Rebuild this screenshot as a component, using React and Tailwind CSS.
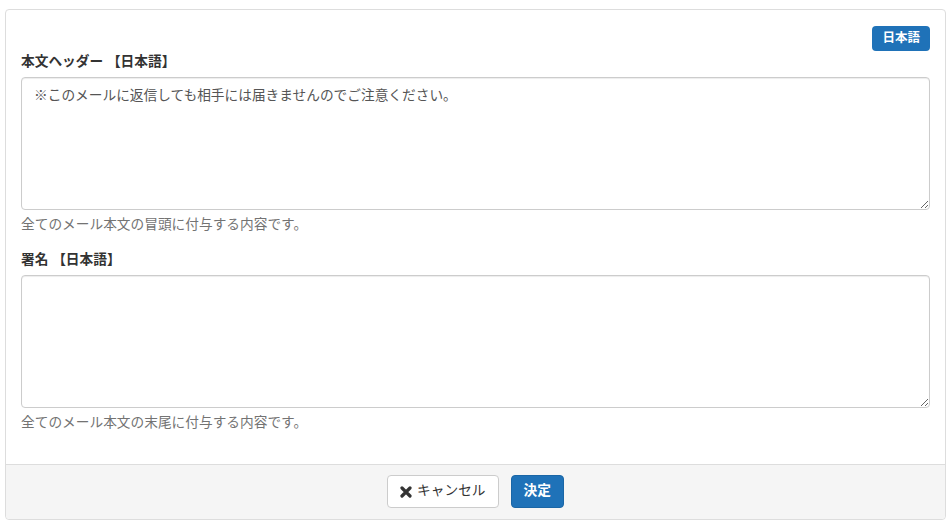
import { useState } from "react";

const FONT = { fontFamily: '"Helvetica Neue", "Liberation Sans", "Noto Sans CJK JP", sans-serif' };

function Field({ label, value, onChange, help }) {
  return (
    <div className="mb-[15px]">
      <label className="block font-bold text-[13.7px] leading-[20px] mb-[5px] text-[#333]">{label}</label>
      <textarea
        value={value}
        onChange={(e) => onChange(e.target.value)}
        className="block w-full h-[133px] border border-[#ccc] rounded-[4px] px-[12px] py-[9px] text-[13.7px] leading-[18px] text-[#555] outline-none shadow-[inset_0_1px_1px_rgba(0,0,0,0.075)]"
      />
      <p className="mt-[5px] text-[13.7px] leading-[20px] text-[#737373]">{help}</p>
    </div>
  );
}

export default function App() {
  const [header, setHeader] = useState("※このメールに返信しても相手には届きませんのでご注意ください。");
  const [sign, setSign] = useState("");

  return (
    <div className="bg-white min-h-[527px] pt-[9px] px-[5px]" style={FONT}>
      <div className="border border-[#ddd] rounded-[4px] bg-white">
        <div className="px-[15px] pt-[16px] pb-[16px]">
          <div className="flex justify-end">
            <span className="bg-[#1f72b8] text-white font-bold text-[12.5px] leading-[25px] h-[25px] px-[10px] rounded-[4px]">日本語</span>
          </div>
          <div className="mt-px">
            <Field
              label="本文ヘッダー 【日本語】"
              value={header}
              onChange={setHeader}
              help="全てのメール本文の冒頭に付与する内容です。"
            />
            <Field
              label="署名 【日本語】"
              value={sign}
              onChange={setSign}
              help="全てのメール本文の末尾に付与する内容です。"
            />
          </div>
        </div>
        <div className="bg-[#f5f5f5] border-t border-[#ddd] rounded-b-[4px] pt-[10px] pb-[11px] flex justify-center gap-[12px]">
          <button className="h-[33px] px-[12px] bg-white border border-[#ccc] rounded-[4px] text-[13.7px] text-[#333] flex items-center gap-[5px]">
            <svg width="12" height="12" viewBox="0 0 12 12">
              <path d="M2 2 L10 10 M10 2 L2 10" stroke="#333" strokeWidth="3.2" strokeLinecap="round" />
            </svg>
            キャンセル
          </button>
          <button className="h-[33px] px-[12px] bg-[#1f72b8] border border-[#1a66a6] rounded-[4px] text-[13.7px] font-bold text-white">
            決定
          </button>
        </div>
      </div>
    </div>
  );
}
